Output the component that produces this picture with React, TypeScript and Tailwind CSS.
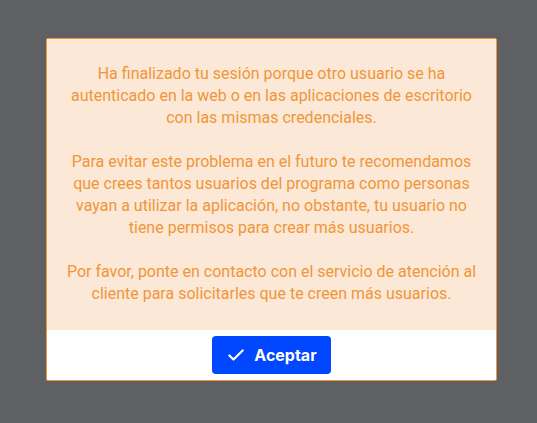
import React from "react";

const paragraphs: string[] = [
    "Ha finalizado tu sesión porque otro usuario se ha autenticado en la web o en las aplicaciones de escritorio con las mismas credenciales.",
    "Para evitar este problema en el futuro te recomendamos que crees tantos usuarios del programa como personas vayan a utilizar la aplicación, no obstante, tu usuario no tiene permisos para crear más usuarios.",
    "Por favor, ponte en contacto con el servicio de atención al cliente para solicitarles que te creen más usuarios.",
];

export default function App() {
    return (
        <div className="w-[537px] h-[423px] bg-[#5f6064] pt-[38px] pl-[46px]">
            <div className="w-[451px] border border-[#f0963a] rounded-[2px] overflow-hidden bg-white">
                <div
                    className="bg-[#fce8d6] px-4 pt-[24px] pb-[25px] flex flex-col gap-[22px] text-center text-[16px] leading-[22px] text-[#f0963a]"
                    style={{ fontFamily: "Roboto, 'Liberation Sans', sans-serif" }}
                >
                    {paragraphs.map((text, i) => (
                        <p key={i}>{text}</p>
                    ))}
                </div>
                <div className="flex justify-center py-[6px]">
                    <button
                        className="flex items-center gap-2 h-[38px] w-[119px] justify-center rounded-[4px] bg-[#0047ff] text-white text-[16px] font-bold"
                        style={{ fontFamily: "Inter, 'Liberation Sans', sans-serif" }}
                    >
                        <svg width="20" height="20" viewBox="0 0 24 24" fill="none" stroke="currentColor" strokeWidth="2.6" strokeLinecap="round" strokeLinejoin="round">
                            <path d="M4 12.5l5 5L20 6.5" />
                        </svg>
                        Aceptar
                    </button>
                </div>
            </div>
        </div>
    );
}
